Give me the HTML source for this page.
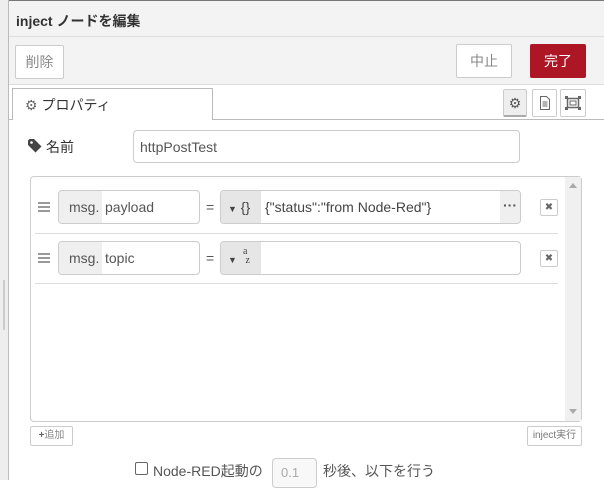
<!DOCTYPE html>
<html><head><meta charset="utf-8"><style>
*{box-sizing:border-box;margin:0;padding:0}
body{width:604px;height:480px;overflow:hidden;background:#fff;font-family:"Liberation Sans","Noto Sans CJK JP",sans-serif;font-size:14px;color:#555;position:relative}
.a{position:absolute}
.btn{position:absolute;border:1px solid #ccc;background:#fff;color:#888;text-align:center;font-size:14px;border-radius:2px}
.inp{position:absolute;border:1px solid #ccc;border-radius:4px;background:#fff}
.hb{position:absolute;width:12px;height:2px;background:#999}
</style></head><body>
<div class="a" style="left:0;top:0;width:9px;height:480px;background:#eee;border-right:1px solid #bbb"></div>
<div class="a" style="left:3px;top:280px;width:2px;height:50px;background:#ccc"></div>
<div class="a" style="left:9px;top:0;width:595px;height:85px;background:#f3f3f3"></div>
<div class="a" style="left:9px;top:0;width:595px;height:1px;background:#777"></div>
<div class="a" style="left:9px;top:36px;width:595px;height:1px;background:#ddd"></div>
<div class="a" style="left:9px;top:84px;width:595px;height:1px;background:#ddd"></div>
<div class="a" style="left:16px;top:11px;font-size:14px;font-weight:bold;color:#333">inject ノードを編集</div>
<div class="btn" style="left:15px;top:45px;width:49px;height:34px;line-height:32px">削除</div>
<div class="btn" style="left:456px;top:44px;width:56px;height:34px;line-height:32px">中止</div>
<div class="btn" style="left:530px;top:44px;width:56px;height:34px;line-height:32px;background:#ad1625;border-color:#ad1625;color:#fff">完了</div>
<div class="a" style="left:9px;top:119px;width:595px;height:1px;background:#bbb"></div>
<div class="a" style="left:12px;top:88px;width:201px;height:32px;border:1px solid #bbb;border-bottom:none;background:#fff;font-size:14px;color:#333;padding:6px 0 0 12px"><span style="color:#666">⚙</span> プロパティ</div>
<div class="btn" style="left:503px;top:89px;width:24px;height:28px;background:#eee;border-bottom:2px solid #aaa;line-height:26px;color:#555">⚙</div>
<div class="btn" style="left:532px;top:89px;width:25px;height:28px;line-height:26px;font-size:13px">
<svg width="12" height="14" style="margin-top:6px"><path d="M1.5 .5h6l3 3v10h-9z M3.5 6h5M3.5 8h5M3.5 10h5" fill="none" stroke="#666"/></svg></div>
<div class="btn" style="left:560px;top:89px;width:26px;height:28px">
<svg width="16" height="14" style="margin-top:6px"><rect x="2.5" y="2.5" width="11" height="9" fill="none" stroke="#666" stroke-width="1.5"/><rect x="5" y="5" width="6" height="4" fill="none" stroke="#666"/><rect x="0" y="0" width="3" height="3" fill="#666"/><rect x="13" y="0" width="3" height="3" fill="#666"/><rect x="0" y="11" width="3" height="3" fill="#666"/><rect x="13" y="11" width="3" height="3" fill="#666"/></svg></div>
<svg class="a" style="left:28px;top:139px" width="14" height="14"><path d="M0 1.5V6l7.5 7.5 6-6L6 0H1.5z" fill="#444"/><circle cx="3.5" cy="3.5" r="1.3" fill="#fff"/></svg>
<div class="a" style="left:46px;top:137px;color:#333;font-size:14px">名前</div>
<div class="inp" style="left:133px;top:130px;width:387px;height:33px;padding:8px 0 0 6px;color:#555">httpPostTest</div>
<div class="a" style="left:30px;top:176px;width:552px;height:246px;border:1px solid #ccc;border-radius:4px"></div>
<div class="a" style="left:565px;top:177px;width:16px;height:244px;background:#f0f0f0"></div>
<div class="a" style="left:569px;top:183px;border:4px solid transparent;border-bottom:5px solid #aaa;border-top:none"></div>
<div class="a" style="left:569px;top:409px;border:4px solid transparent;border-top:5px solid #aaa;border-bottom:none"></div>
<!-- row1 -->
<div class="hb" style="left:38px;top:202px"></div><div class="hb" style="left:38px;top:206px"></div><div class="hb" style="left:38px;top:210px"></div>
<div class="inp" style="left:58px;top:190px;width:142px;height:34px;overflow:hidden"><div class="a" style="left:0;top:0;width:43px;height:34px;background:#efefef;padding:8px 0 0 10px">msg.</div><div class="a" style="left:46px;top:8px">payload</div></div>
<div class="a" style="left:206px;top:199px">=</div>
<div class="inp" style="left:220px;top:190px;width:301px;height:34px;overflow:hidden"><div class="a" style="left:0;top:0;width:40px;height:34px;background:#e6e6e6;padding:8px 0 0 7px;color:#444"><span style="font-size:9px">▼</span> {}</div><div class="a" style="left:44px;top:8px;color:#444">{"status":"from Node-Red"}</div><div class="a" style="right:0;top:0;width:20px;height:34px;background:#efefef;text-align:center;line-height:28px;font-weight:bold;color:#555">···</div></div>
<div class="btn" style="left:540px;top:199px;width:18px;height:17px;font-size:10px;line-height:15px;color:#666">✖</div>
<div class="a" style="left:35px;top:233px;width:523px;height:1px;background:#ddd"></div>
<!-- row2 -->
<div class="hb" style="left:38px;top:253px"></div><div class="hb" style="left:38px;top:257px"></div><div class="hb" style="left:38px;top:261px"></div>
<div class="inp" style="left:58px;top:241px;width:142px;height:34px;overflow:hidden"><div class="a" style="left:0;top:0;width:43px;height:34px;background:#efefef;padding:8px 0 0 10px">msg.</div><div class="a" style="left:46px;top:8px">topic</div></div>
<div class="a" style="left:206px;top:250px">=</div>
<div class="inp" style="left:220px;top:241px;width:301px;height:34px;overflow:hidden"><div class="a" style="left:0;top:0;width:40px;height:34px;background:#e6e6e6;padding:8px 0 0 7px;color:#444"><span style="font-size:9px">▼</span></div><div class="a" style="left:22px;top:5px;font-size:10px;line-height:9px;color:#444;font-family:'Liberation Serif',serif">a<br>&nbsp;z</div></div>
<div class="btn" style="left:540px;top:250px;width:18px;height:17px;font-size:10px;line-height:15px;color:#666">✖</div>
<div class="a" style="left:35px;top:283px;width:523px;height:1px;background:#ddd"></div>
<div class="btn" style="left:30px;top:426px;width:43px;height:20px;font-size:10px;line-height:18px;color:#888"><b style="color:#666">+</b>追加</div>
<div class="btn" style="left:527px;top:426px;width:55px;height:20px;font-size:10px;line-height:18px;color:#777">inject実行</div>
<div class="a" style="left:135px;top:462px;width:13px;height:13px;border:1px solid #666;border-radius:2px"></div>
<div class="a" style="left:153px;top:461px;color:#555">Node-RED起動の</div>
<div class="inp" style="left:272px;top:458px;width:45px;height:30px;background:#f8f8f8;padding:6px 0 0 8px;color:#aaa;font-size:13px">0.1</div>
<div class="a" style="left:323px;top:461px;color:#555">秒後、以下を行う</div>
</body></html>
